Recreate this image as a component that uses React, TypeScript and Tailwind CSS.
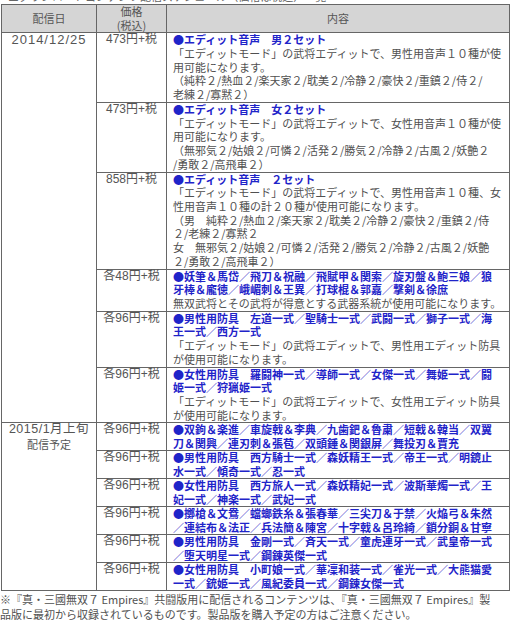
import React from "react";

type Line = { t: string; b?: boolean };
type Row = { price: string; lines: Line[] };

const B = (t: string): Line => ({ t, b: true });
const N = (t: string): Line => ({ t });

const rows2014: Row[] = [
  {
    price: "473円+税",
    lines: [
      B("●エディット音声　男２セット"),
      N("「エディットモード」の武将エディットで、男性用音声１０種が使"),
      N("用可能になります。"),
      N("（純粋２/熱血２/楽天家２/耽美２/冷静２/豪快２/重鎮２/侍２/"),
      N("老練２/寡黙２）"),
    ],
  },
  {
    price: "473円+税",
    lines: [
      B("●エディット音声　女２セット"),
      N("「エディットモード」の武将エディットで、女性用音声１０種が使"),
      N("用可能になります。"),
      N("（無邪気２/姑娘２/可憐２/活発２/勝気２/冷静２/古風２/妖艶２"),
      N("/勇敢２/高飛車２）"),
    ],
  },
  {
    price: "858円+税",
    lines: [
      B("●エディット音声　２セット"),
      N("「エディットモード」の武将エディットで、男性用音声１０種、女"),
      N("性用音声１０種の計２０種が使用可能になります。"),
      N("（男　純粋２/熱血２/楽天家２/耽美２/冷静２/豪快２/重鎮２/侍"),
      N("２/老練２/寡黙２"),
      N("女　無邪気２/姑娘２/可憐２/活発２/勝気２/冷静２/古風２/妖艶"),
      N("２/勇敢２/高飛車２）"),
    ],
  },
  {
    price: "各48円+税",
    lines: [
      B("●妖筆＆馬岱／飛刀＆祝融／飛賦甲＆関索／旋刃盤＆鮑三娘／狼"),
      B("牙棒＆龐徳／峨嵋刺＆王異／打球棍＆郭嘉／撃剣＆徐庶"),
      N("無双武将とその武将が得意とする武器系統が使用可能になります。"),
    ],
  },
  {
    price: "各96円+税",
    lines: [
      B("●男性用防具　左道一式／聖騎士一式／武闘一式／獅子一式／海"),
      B("王一式／西方一式"),
      N("「エディットモード」の武将エディットで、男性用エディット防具"),
      N("が使用可能になります。"),
    ],
  },
  {
    price: "各96円+税",
    lines: [
      B("●女性用防具　羅闘神一式／導師一式／女傑一式／舞姫一式／闘"),
      B("姫一式／狩猟姫一式"),
      N("「エディットモード」の武将エディットで、女性用エディット防具"),
      N("が使用可能になります。"),
    ],
  },
];

const rows2015: Row[] = [
  {
    price: "各96円+税",
    lines: [
      B("●双鉤＆楽進／車旋戟＆李典／九歯鈀＆魯粛／短戟＆韓当／双翼"),
      B("刀＆関興／連刃刺＆張苞／双頭錘＆関銀屏／舞投刃＆賈充"),
    ],
  },
  {
    price: "各96円+税",
    lines: [
      B("●男性用防具　西方騎士一式／森妖精王一式／帝王一式／明鏡止"),
      B("水一式／傾奇一式／忍一式"),
    ],
  },
  {
    price: "各96円+税",
    lines: [
      B("●女性用防具　西方旅人一式／森妖精妃一式／波斯華燭一式／王"),
      B("妃一式／神楽一式／武妃一式"),
    ],
  },
  {
    price: "各96円+税",
    lines: [
      B("●擲槍＆文鴦／蟷螂鉄糸＆張春華／三尖刀＆于禁／火焔弓＆朱然"),
      B("／連結布＆法正／兵法簡＆陳宮／十字戟＆呂玲綺／鎖分銅＆甘寧"),
    ],
  },
  {
    price: "各96円+税",
    lines: [
      B("●男性用防具　金剛一式／斉天一式／童虎連牙一式／武皇帝一式"),
      B("／堕天明星一式／鋼錬英傑一式"),
    ],
  },
  {
    price: "各96円+税",
    lines: [
      B("●女性用防具　小町娘一式／華凜和装一式／雀光一式／大熊猫愛"),
      B("一式／銃姫一式／風紀委員一式／鋼錬女傑一式"),
    ],
  },
];

function Content({ lines, tight }: { lines: Line[]; tight?: boolean }) {
  return (
    <td
      className={
        "border border-[#666] align-top pl-[6px] pr-0 py-0 text-[11px] whitespace-nowrap overflow-hidden " +
        (tight ? "leading-[13.5px]" : "leading-[13.72px]")
      }
    >
      {lines.map((l, i) => (
        <div
          key={i}
          className={l.b ? "font-bold text-[#1f24c9]" : "text-[#505050]"}
        >
          {l.t}
        </div>
      ))}
    </td>
  );
}

function Price({ p }: { p: string }) {
  return (
    <td className="border border-[#666] align-top text-center p-0 text-[12px] leading-[13.65px] text-[#555] font-['Liberation_Sans','Noto_Sans_CJK_JP',sans-serif] whitespace-nowrap">
      {p}
    </td>
  );
}

export default function App() {
  return (
    <div className="w-[512px] h-[622px] bg-white overflow-hidden font-['Noto_Sans_CJK_JP',sans-serif] text-[#555]">
      <div className="h-[4px] overflow-hidden">
        <div className="mt-[-10px] pl-[8px] text-[11px] leading-[13px] text-[#666] whitespace-nowrap">
          ■ダウンロードコンテンツ配信スケジュール（価格は税込）一覧
        </div>
      </div>
      <table className="ml-[1px] w-[508px] table-fixed border-collapse">
        <colgroup>
          <col className="w-[95px]" />
          <col className="w-[70px]" />
          <col className="w-[343px]" />
        </colgroup>
        <thead>
          <tr className="bg-[#d5d5d5]">
            <th className="border border-[#666] font-normal text-[11px] leading-[13.65px] text-[#555] p-0 align-middle">
              配信日
            </th>
            <th className="border border-[#666] font-normal text-[11px] leading-[13.65px] text-[#555] p-0 align-middle">
              <div>価格</div>
              <div>(税込)</div>
            </th>
            <th className="border border-[#666] font-normal text-[11px] leading-[13.65px] text-[#555] p-0 align-middle">
              内容
            </th>
          </tr>
        </thead>
        <tbody>
          {rows2014.map((r, i) => (
            <tr key={"a" + i}>
              {i === 0 && (
                <td
                  rowSpan={rows2014.length}
                  className="border border-[#666] align-top text-center p-0 text-[13px] tracking-[1px] leading-[13.65px] text-[#555] font-['Liberation_Sans','Noto_Sans_CJK_JP',sans-serif]"
                >
                  2014/12/25
                </td>
              )}
              <Price p={r.price} />
              <Content lines={r.lines} />
            </tr>
          ))}
          {rows2015.map((r, i) => (
            <tr key={"b" + i}>
              {i === 0 && (
                <td
                  rowSpan={rows2015.length}
                  className="border border-[#666] align-top text-center p-0 text-[#555]"
                >
                  <div className="text-[12.5px] leading-[13.5px] tracking-[0.5px] font-['Liberation_Sans','Noto_Sans_CJK_JP',sans-serif]">
                    2015/1月上旬
                  </div>
                  <div className="text-[11px] leading-[14px]">配信予定</div>
                </td>
              )}
              <Price p={r.price} />
              <Content lines={r.lines} tight />
            </tr>
          ))}
        </tbody>
      </table>
      <div className="pt-[1px] text-[11px] leading-[15px] text-[#505050] whitespace-nowrap">
        <div>※『真・三國無双７ Empires』共闘版用に配信されるコンテンツは、『真・三國無双７ Empires』製</div>
        <div>品版に最初から収録されているものです。製品版を購入予定の方はご注意ください。</div>
      </div>
    </div>
  );
}
